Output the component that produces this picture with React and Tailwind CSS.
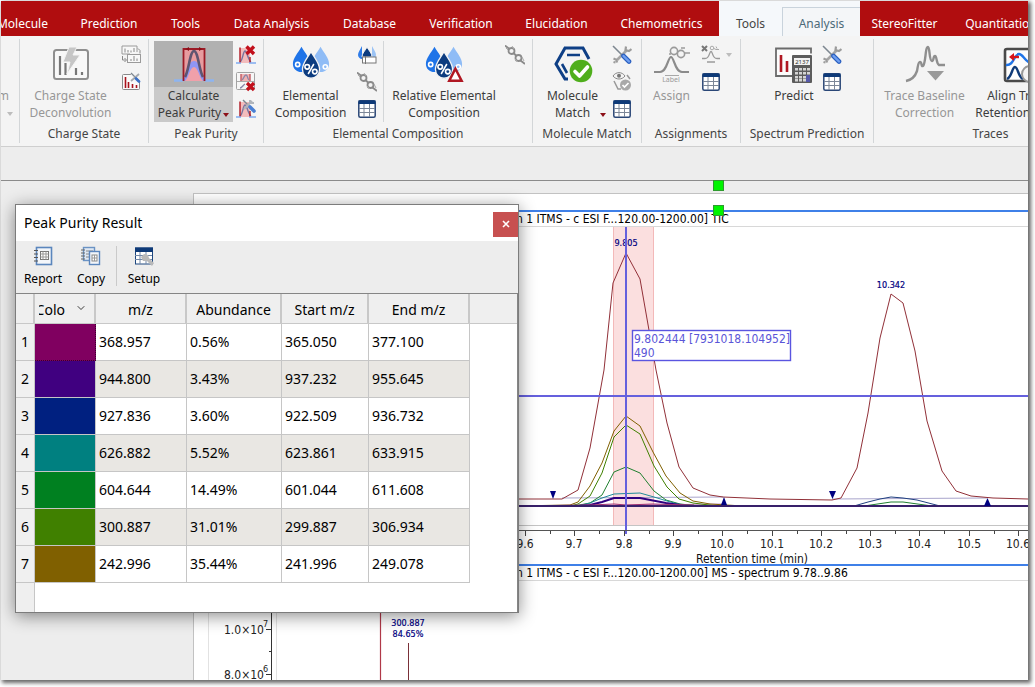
import clsx from 'clsx'
import { ChevronDown } from 'lucide-react'

const MENU_TABS = [
  { label: 'Molecule', className: 'w-[63px] justify-end pr-4' },
  { label: 'Prediction', className: 'w-[90px]' },
  { label: 'Tools', className: 'w-[63px]' },
  { label: 'Data Analysis', className: 'w-[109px]' },
  { label: 'Database', className: 'w-[87px]' },
  { label: 'Verification', className: 'w-[96px]' },
  { label: 'Elucidation', className: 'w-[95px]' },
  { label: 'Chemometrics', className: 'w-[115px]' },
  { label: 'Tools', tone: 'context', className: 'w-[63px]' },
  { label: 'Analysis', tone: 'active', className: 'w-[78px]' },
  { label: 'StereoFitter', className: 'w-[89px]' },
  { label: 'Quantitation', className: 'w-[104px]' },
]

const PEAKS = [
  { color: '#800060', mz: '368.957', abundance: '0.56%', start: '365.050', end: '377.100' },
  { color: '#400080', mz: '944.800', abundance: '3.43%', start: '937.232', end: '955.645' },
  { color: '#002080', mz: '927.836', abundance: '3.60%', start: '922.509', end: '936.732' },
  { color: '#008080', mz: '626.882', abundance: '5.52%', start: '623.861', end: '633.915' },
  { color: '#008020', mz: '604.644', abundance: '14.49%', start: '601.044', end: '611.608' },
  { color: '#408000', mz: '300.887', abundance: '31.01%', start: '299.887', end: '306.934' },
  { color: '#806000', mz: '242.996', abundance: '35.44%', start: '241.996', end: '249.078' },
]

// ─── Icons ────────────────────────────────────────────────────────────────────
function Large({ children, viewBox = '0 0 40 40' }) {
  return (
    <svg width="40" height="40" viewBox={viewBox} fill="none" aria-hidden="true">
      {children}
    </svg>
  )
}

function Small({ children }) {
  return (
    <svg width="20" height="20" viewBox="0 0 20 20" fill="none" aria-hidden="true">
      {children}
    </svg>
  )
}

function DeconvolutionIcon() {
  return (
    <Large>
      <rect x="3" y="6" width="34" height="29" rx="2.5" fill="#f8f8f8" stroke="#8f8f8f" strokeWidth="2" />
      <path d="M9 12v19M14.5 19v12M25 24v7M31 28v3" stroke="#777" strokeWidth="2.2" />
      <path d="M18 3h8l-4 8h7L16 30l3-12h-7z" fill="#c6c6c6" stroke="#f4f4f4" />
    </Large>
  )
}

function SwapSpectraIcon() {
  return (
    <Small>
      <path d="M9 9H1V1h15v6" stroke="#9a9a9a" fill="#f8f8f8" />
      <path d="M4 3.500v4M7 5v2.500M10 5.500v2M13 3v4" stroke="#888" />
      <rect x="6.500" y="9.500" width="13" height="8" stroke="#9a9a9a" fill="#f8f8f8" />
      <path d="M10 14v2M13 11v5M16 13.500v2.500M1.500 11v4h3M3.500 13l2 2-2 2M17 3.500l2 2v3" stroke="#888" />
    </Small>
  )
}

function SpectraOptionsIcon() {
  return (
    <Small>
      <rect x="1.500" y="2.500" width="17" height="15" rx="1" fill="#fafafa" stroke="#8a8a8a" />
      <path d="M4.500 5v11M7.500 10v6M11.500 12v4M15.500 13v3" stroke="#a8121c" strokeWidth="1.600" />
      <path d="M9 1h10v9h-5z" fill="#f4f4f4" />
      <path d="M10 1l7 7" stroke="#7d8790" strokeWidth="1.200" />
      <path d="M10 9l8-7" stroke="#a5a9ae" strokeWidth="1.800" />
      <path d="M15 6.500l3 3" stroke="#3b6fc4" strokeWidth="2.800" strokeLinecap="round" />
    </Small>
  )
}

function PeakPurityIcon() {
  return (
    <Large>
      <path d="M9 5h22v32H9z" fill="#e79c9f" />
      <path d="M1 37c7 0 9-3 11-8 3-8 4-12 8-12s5 4 8 12c2 5 4 8 11 8z" fill="#8f96f5" />
      <path d="M20 23c-4 0-5 10-9 14h18c-4-4-5-14-9-14z" fill="#f0a0aa" />
      <path d="M11 33c4-7 5-26 9-26s5 19 9 26" stroke="#5e5570" strokeWidth="2.600" />
      <path d="M0 36.500h9M31 36.500h9" stroke="#8db4f0" strokeWidth="2.400" />
      <path d="M9.500 37V5h21v32" stroke="#9c1a26" strokeWidth="1.800" />
      <path d="M15 3l-3.500 2L15 7zM25 3l3.500 2L25 7z" fill="#8c1018" />
    </Large>
  )
}

function MiniPeak() {
  return (
    <>
      <path d="M4 3h10v15H4z" fill="#f3bcbc" />
      <path d="M4 17c3-2 3-11 5-11s3 9 6 11" stroke="#77749f" strokeWidth="1.400" />
      <path d="M4 18V2.500M14 18v-6" stroke="#b01722" strokeWidth="1.400" />
      <path d="M0 18h5M13 18h7" stroke="#7fabf0" strokeWidth="1.500" />
    </>
  )
}

function PurityClearIcon() {
  return (
    <Small>
      <MiniPeak />
      <path d="M10.500 1.500l7.500 7.500M18 1.500L10.500 9" stroke="#c2101c" strokeWidth="3.400" />
    </Small>
  )
}

function PurityRemoveIcon() {
  return (
    <Small>
      <rect x="0.500" y="0.500" width="18" height="17" rx="1" fill="#f6f6f6" stroke="#a2a2a2" />
      <path d="M5 2h9v7H5z" fill="#f1b3b3" />
      <path d="M1 9.500h17" stroke="#aaa" />
      <path d="M5 2v7M14 2v7" stroke="#c25a62" strokeWidth="1.400" />
      <path d="M6 8c2-1 2-5 4-5s1 4 3 5M4 16c2 0 3-3 5-4" stroke="#8a86a8" strokeWidth="1.300" />
      <path d="M11 11l7 7M18 11l-7 7" stroke="#c2101c" strokeWidth="3.200" />
    </Small>
  )
}

function PurityOptionsIcon() {
  return (
    <Small>
      <MiniPeak />
      <path d="M7 1l8 8" stroke="#7d8790" strokeWidth="1.400" />
      <path d="M8 10l8-8M14 1l0 3 4 0" stroke="#b0b5bb" strokeWidth="2" />
      <path d="M14 8l4 4" stroke="#4a80d4" strokeWidth="3.600" strokeLinecap="round" />
    </Small>
  )
}

function Drops() {
  return (
    <>
      <path d="M10 3C6 10 1 15 1 21c0 5 4 8.500 9 8.500S19 26 19 21c0-6-5-11-9-18z" fill="#1f74e8" />
      <path d="M30 3c-4 7-9 12-9 18 0 5 4 8.500 9 8.500s9-3.500 9-8.500c0-6-5-11-9-18z" fill="#8fbcf6" />
      <circle cx="6" cy="21.500" r="2.200" stroke="#fff" strokeWidth="1.700" />
      <circle cx="35" cy="24" r="2.200" stroke="#fff" strokeWidth="1.700" />
      <path d="M20 8c-4 7-9 12-9 18.500 0 5.500 4 9.500 9 9.500s9-4 9-9.500C29 20 24 15 20 8z" fill="#0c3c80" stroke="#f4f4f4" strokeWidth="1.400" />
      <circle cx="16" cy="24" r="2.400" stroke="#fff" strokeWidth="1.700" />
      <circle cx="24" cy="29" r="2.400" stroke="#fff" strokeWidth="1.700" />
      <path d="M23 21l-6 10.500" stroke="#fff" strokeWidth="1.600" />
    </>
  )
}

function ElementalIcon() {
  return <Large viewBox="-1 0 42 42"><Drops /></Large>
}

function RelativeElementalIcon() {
  return (
    <Large viewBox="-1 0 42 42">
      <Drops />
      <path d="M32 26l6.500 12.500h-13z" fill="#fff" stroke="#b01722" strokeWidth="2.600" />
    </Large>
  )
}

function DropsEditIcon() {
  return (
    <Small>
      <path d="M5 1c-2 4-4 6-4 9 0 2 2 4 4 4z" fill="#2f7ce8" />
      <path d="M15 1c2 4 4 6 4 9 0 2-2 4-4 4z" fill="#9bc3f5" />
      <path d="M10 2c-2 4-5 6-5 10h10c0-4-3-6-5-10z" fill="#0c3c80" stroke="#f4f4f4" />
      <rect x="5.500" y="12" width="13.500" height="6" fill="#fff" stroke="#777" />
      <path d="M8.500 11v8" stroke="#777" />
    </Small>
  )
}

function ChainIcon() {
  return (
    <Small>
      <g stroke="#8b8b8b" strokeWidth="1.800">
        <circle cx="6.500" cy="6" r="3" />
        <circle cx="13.500" cy="13" r="3" />
        <path d="M0 0.500l4.500 3.500M8.500 8l3 3M15.500 15.500l4.500 3.500" />
      </g>
      <path d="M1 3l2 2M7 1l2 3M10 14l3 3M17 12l2 4" stroke="#aaa" />
    </Small>
  )
}

function TableIcon() {
  return (
    <Small>
      <rect x="1.800" y="1.800" width="16.400" height="16.400" rx="1.500" fill="#fff" stroke="#2a4777" strokeWidth="1.500" />
      <path d="M1.500 1.500h17v3.500h-17z" fill="#0e3a78" />
      <path d="M7 5v13M12.500 5v13M2 9.500h16M2 13.500h16" stroke="#7c8798" />
    </Small>
  )
}

function MoleculeMatchIcon() {
  return (
    <Large>
      <path d="M15 35h-3L3 20 12 4h18l6 11" stroke="#0e3f86" strokeWidth="3" />
      <path d="M14 11h13M9 20l5 9" stroke="#0e3f86" strokeWidth="2.600" />
      <circle cx="28" cy="27" r="12.500" fill="#f4f4f4" />
      <circle cx="28" cy="27" r="11.300" fill="#4fae1c" />
      <path d="M22 27.500l4.500 4.500 8-9" stroke="#fff" strokeWidth="3.600" strokeLinecap="round" strokeLinejoin="round" />
    </Large>
  )
}

function WrenchScrewdriverIcon() {
  return (
    <Small>
      <path d="M5 15L15 5" stroke="#a6a6a6" strokeWidth="2.600" />
      <path d="M1.500 13.500l2.800 1.200.8 2.800M1.500 17l2 .5M14 1.500l-.5 3.500 3.500 1 2.500-2" stroke="#9c9c9c" strokeWidth="2.200" />
      <path d="M1 1l10 10" stroke="#7d8790" strokeWidth="1.600" />
      <path d="M11.500 11l5.500 5.500" stroke="#2a5fc0" strokeWidth="4.600" strokeLinecap="round" />
      <path d="M11.500 11l5.500 5.500" stroke="#6f9ff0" strokeWidth="2.400" strokeLinecap="round" />
    </Small>
  )
}

function EyeMatchIcon() {
  return (
    <Small>
      <path d="M1 4c3-4.500 9-4.500 12 0-3 4-9 4-12 0z" stroke="#888" />
      <circle cx="7" cy="3.800" r="2" fill="#777" />
      <path d="M2 9l4 8h3M15 3l3 4" stroke="#999" strokeWidth="1.500" />
      <circle cx="13.500" cy="13" r="5.500" fill="#a9a9a9" />
      <path d="M10.500 13l2 2 4-4" stroke="#fff" strokeWidth="1.700" />
    </Small>
  )
}

function AssignIcon() {
  return (
    <Large>
      <path d="M2 28h6c7 0 8-15 11-15s4 15 11 15h7" stroke="#8b8b8b" strokeWidth="2.200" />
      <g stroke="#9a9a9a" strokeWidth="1.600">
        <circle cx="22" cy="7" r="3.600" fill="#f4f4f4" />
        <circle cx="29" cy="10" r="3.600" fill="#f4f4f4" />
        <path d="M32 9h6M29 4h4M17 10h2" />
      </g>
      <path d="M13 31.500h14" stroke="#a8a8a8" />
      <text x="19" y="38" textAnchor="middle" fontSize="7" fill="#9a9a9a">Label</text>
    </Large>
  )
}

function AssignClearIcon() {
  return (
    <Small>
      <path d="M1 1l5 5M6 1L1 6" stroke="#777" strokeWidth="2" />
      <path d="M1 13.500h3c5 0 4-7 6-7s1 7 6 7h3M6 17h8" stroke="#9a9a9a" strokeWidth="1.300" />
      <circle cx="11" cy="3" r="1.800" stroke="#aaa" />
      <path d="M13 3.500l2 1h3M15 1.500l1 2" stroke="#aaa" />
    </Small>
  )
}

function PredictIcon() {
  return (
    <Large>
      <path d="M20 32H2V4.500h35v5" stroke="#6b6b6b" strokeWidth="1.800" fill="#fcfcfc" />
      <path d="M7 11v17M13 17v11" stroke="#b01722" strokeWidth="2.600" />
      <rect x="18" y="11" width="20" height="28" rx="1" fill="#5c5c5c" />
      <rect x="20" y="14" width="16" height="7" fill="#f2f2f2" />
      <text x="28" y="20" textAnchor="middle" fontSize="6" fill="#333">2137</text>
      <g fill="#d5d5d5">
        {[24, 28, 32, 35].map(y =>
          [21, 25, 29, 33].map(x => <rect key={`${x}-${y}`} x={x} y={y} width="3" height="2.500" />)
        )}
      </g>
      <path d="M32 31h4v7h-4z" fill="#5659a8" />
    </Large>
  )
}

function BaselineIcon() {
  return (
    <Large>
      <path d="M1 37c5-1 9-4 11-10 1-5 1-9 3-9s1 5 3 4c3-3 2-19 5-19 2 0 1 14 4 14 2 0 1-5 3-5s1 7 4 9h6" stroke="#8f8f8f" strokeWidth="2.400" />
      <path d="M22 27h17l-8.500 9.500z" fill="#9a9a9a" />
    </Large>
  )
}

function AlignIcon() {
  return (
    <Large>
      <rect x="4" y="5" width="33" height="32" rx="2" fill="#fdfdfd" stroke="#4a4a4a" strokeWidth="2.600" />
      <path d="M5 21c8 1 8-11 13-11s5 10 18 10" stroke="#1f74e8" strokeWidth="2.400" />
      <path d="M6 35c5-2 5-12 8-12s3 10 8 12" stroke="#0e3a78" strokeWidth="2.400" />
      <path d="M18 13h-6" stroke="#d8141c" strokeWidth="2.400" />
      <path d="M13 9l-5 4 5 4z" fill="#d8141c" />
      <circle cx="29" cy="30" r="8" fill="#f4f4f4" stroke="#999" strokeWidth="2" />
    </Large>
  )
}

function ReportIcon() {
  return (
    <Small>
      <rect x="3.500" y="1.500" width="15" height="17" fill="#f3f6fa" stroke="#5b86bd" strokeWidth="1.600" />
      <path d="M1 4.500h4M1 8h4M1 11.500h4M1 15h4" stroke="#555" strokeWidth="1.200" />
      <rect x="7.500" y="5.500" width="8" height="8" fill="#fff" stroke="#777" />
      <path d="M10 5.500v8M13 5.500v8M7.500 8h8M7.500 11h8" stroke="#999" />
    </Small>
  )
}

function CopyReportIcon() {
  return (
    <Small>
      <rect x="2.500" y="1.500" width="11" height="13" fill="#dfe8f3" stroke="#6b93c4" strokeWidth="1.400" />
      <path d="M0 4h4M0 7h4M0 10h4M0 13h4" stroke="#666" />
      <path d="M5 5h7M5 8h3M5 11h3" stroke="#888" />
      <rect x="8.500" y="5.500" width="10" height="13" fill="#f3f6fa" stroke="#5b86bd" strokeWidth="1.400" />
      <rect x="11" y="9" width="5" height="6" fill="#fff" stroke="#888" />
      <path d="M13.500 9v6M11 12h5" stroke="#999" />
    </Small>
  )
}

function SetupIcon() {
  return (
    <Small>
      <rect x="1.500" y="2" width="17" height="16" fill="#fff" stroke="#1f4880" />
      <path d="M1 1.500h18V6H1z" fill="#0e3a78" />
      <path d="M6 6v12M12 6v12M1 9.500h17M1 13.500h17" stroke="#7288a8" />
      <path d="M7 11l3-3 4 1 1 3 5 5-2 3-5-5-4 0z" fill="#b9b9b9" />
    </Small>
  )
}

// ─── Ribbon ───────────────────────────────────────────────────────────────────
function MenuTab({ label, tone, className }) {
  return (
    <button
      className={clsx(
        'flex shrink-0 items-center text-[12px] whitespace-nowrap',
        !className.includes('justify-end') && 'justify-center',
        !tone && 'bg-[#b00d0f] pt-[10px] text-white',
        tone === 'context' && 'bg-[#f5f8fb] pt-[10px] text-[#444]',
        tone === 'active' && 'mt-[6px] border-t border-l border-[#c9d3dc] bg-[#f4f6f8] pt-[3px] text-[#4c6a78]',
        className,
      )}
    >
      {label}
    </button>
  )
}

function Caret({ className }) {
  return <span className={clsx('inline-block border-x-[3px] border-t-[4px] border-x-transparent', className)} />
}

function BigButton({ icon: Icon, lines, disabled, active, caret, className }) {
  return (
    <button
      disabled={disabled}
      className={clsx(
        'flex h-[81px] shrink-0 flex-col text-[12px] leading-[17px] whitespace-nowrap',
        disabled ? 'text-[#979797]' : 'text-[#3c3c3c]',
        active && 'bg-[#c9c9c9]',
        className,
      )}
    >
      <span className={clsx('flex h-[46px] w-full items-center justify-center', active && 'bg-[#b1b1b1]')}>
        <Icon />
      </span>
      {lines.map((line, i) => (
        <span key={line} className="flex w-full items-center justify-center">
          {line}
          {caret && i === lines.length - 1 && <Caret className={caret} />}
        </span>
      ))}
    </button>
  )
}

function SmallColumn({ items, className }) {
  return (
    <div className={clsx('flex w-5 shrink-0 flex-col', className)}>
      {items.map(({ icon: Icon, name }) => (
        <button key={name} aria-label={name} className="flex h-[27px] items-center justify-center">
          <Icon />
        </button>
      ))}
    </div>
  )
}

function Group({ label, className, children }) {
  return (
    <section className={clsx('my-[3px] flex shrink-0 flex-col border-r border-[#d3d6d8] pt-[2px]', className)}>
      <div className="flex">{children}</div>
      <h2 className="flex flex-1 items-center justify-center pt-[2px] text-[12px] whitespace-nowrap text-[#444]">{label}</h2>
    </section>
  )
}

function Ribbon() {
  return (
    <div className="flex h-[111px] shrink-0 overflow-hidden border-b border-[#cfcfcf] bg-[#f4f4f4]">
      <section className="my-[3px] w-[19px] shrink-0 overflow-hidden border-r border-[#d3d6d8] pt-[48px] text-[12px] leading-[17px] text-[#979797]">
        <div className="flex w-2 justify-end">m</div>
        <div className="flex justify-center"><Caret className="mt-2 border-t-[#bdbdbd]" /></div>
      </section>
      <Group label="Charge State" className="w-[129px]">
        <BigButton icon={DeconvolutionIcon} lines={['Charge State', 'Deconvolution']} disabled className="w-[101px]" />
        <SmallColumn items={[
          { icon: SwapSpectraIcon, name: 'Swap spectra' },
          { icon: SpectraOptionsIcon, name: 'Charge state options' },
        ]} />
      </Group>
      <Group label="Peak Purity" className="w-[115px]">
        <BigButton
          icon={PeakPurityIcon}
          lines={['Calculate', 'Peak Purity']}
          active
          caret="ml-[2px] mt-1 border-t-[#8c1018]"
          className="ml-[5px] w-[79px]"
        />
        <SmallColumn className="ml-[3px]" items={[
          { icon: PurityClearIcon, name: 'Clear peak purity' },
          { icon: PurityRemoveIcon, name: 'Remove all' },
          { icon: PurityOptionsIcon, name: 'Peak purity options' },
        ]} />
      </Group>
      <Group label="Elemental Composition" className="w-[269px]">
        <BigButton icon={ElementalIcon} lines={['Elemental', 'Composition']} className="w-[93px]" />
        <SmallColumn items={[
          { icon: DropsEditIcon, name: 'Edit composition' },
          { icon: ChainIcon, name: 'Link' },
          { icon: TableIcon, name: 'Composition table' },
        ]} />
        <div className="ml-[6px] w-px bg-[#d3d6d8]" />
        <BigButton icon={RelativeElementalIcon} lines={['Relative Elemental', 'Composition']} className="w-[120px]" />
        <SmallColumn className="ml-[1px]" items={[{ icon: ChainIcon, name: 'Link relative' }]} />
      </Group>
      <Group label="Molecule Match" className="w-[109px]">
        <BigButton
          icon={MoleculeMatchIcon}
          lines={['Molecule', 'Match']}
          caret="ml-[10px] -mr-4 mt-1 border-t-[#8c1018]"
          className="w-[79px]"
        />
        <SmallColumn items={[
          { icon: WrenchScrewdriverIcon, name: 'Match options' },
          { icon: EyeMatchIcon, name: 'Show matches' },
          { icon: TableIcon, name: 'Match table' },
        ]} />
      </Group>
      <Group label="Assignments" className="w-[99px]">
        <BigButton icon={AssignIcon} lines={['Assign']} disabled className="w-[59px]" />
        <SmallColumn items={[
          { icon: AssignClearIcon, name: 'Clear assignments' },
          { icon: TableIcon, name: 'Assignment table' },
        ]} />
        <div className="flex h-[27px] w-4 items-center justify-center"><Caret className="border-t-[#bdbdbd]" /></div>
      </Group>
      <Group label="Spectrum Prediction" className="w-[133px]">
        <BigButton icon={PredictIcon} lines={['Predict']} className="ml-[25px] w-[56px]" />
        <SmallColumn items={[
          { icon: WrenchScrewdriverIcon, name: 'Prediction options' },
          { icon: TableIcon, name: 'Prediction table' },
        ]} />
      </Group>
      <Group label="Traces" className="w-[234px]">
        <BigButton icon={BaselineIcon} lines={['Trace Baseline', 'Correction']} disabled className="w-[101px]" />
        <BigButton icon={AlignIcon} lines={['Align Traces', 'Retention Times']} className="w-[92px]" />
      </Group>
    </div>
  )
}

// ─── Charts ───────────────────────────────────────────────────────────────────
const TIC_TRACES = [
  { color: '#c090c8', points: '320,279 362,279 529,277' },
  { color: '#a9a5cc', points: '368,271 529,270' },
  { color: '#a9a5cc', points: '638,272 793,271' },
  { color: '#806000', points: '320,279 376,278 384,275 396,259 408,236 420,204 432,189 446,199 459,225 472,249 486,266 499,274 516,277 549,279' },
  { color: '#408000', points: '376,279 384,277 396,269 408,246 420,210 432,198 446,207 460,239 473,260 485,272 499,276 523,279' },
  { color: '#208030', points: '380,279 396,276 408,268 420,245 432,240 446,246 460,264 472,273 486,277 506,279' },
  { color: '#208a98', points: '384,279 396,276 408,271 420,267 446,266 460,270 473,274 484,277 500,279' },
  { color: '#300080', points: '384,279 396,278 408,275 420,271 446,271 472,276 493,279', width: 2 },
  { color: '#a03070', points: '320,279 396,278 420,277 432,278 459,277 500,278' },
  { color: '#204080', points: '660,279 674,275 686,272 697,270 709,271 723,273 746,279' },
  { color: '#208030', points: '670,279 697,275 709,275 738,279' },
]

const TIC_MAIN =
  '320,272 368,272 384,263 396,221 410,143 419,56 432,26 446,52 462,143 473,196 485,240 499,261 516,268 529,270 576,272 638,273 ' +
  '647,271 663,241 674,186 686,111 697,67 709,76 721,124 733,194 748,244 762,264 777,269 799,271 834,272 900,273'

const TICKS = ['9.6', '9.7', '9.8', '9.9', '10.0', '10.1', '10.2', '10.3', '10.4', '10.5', '10.6']
// pixel position of a tick; 9.6 min sits at 331 and each 0.1 min is 49.3 px
const tickX = i => Math.round(331 + i * 49.3)

function ChartTitle({ children }) {
  return (
    <div className="h-[17px] shrink-0 overflow-hidden border-t-2 border-b border-t-[#3f80e8] border-b-[#d8d8d8] pl-[322px] text-[12px] leading-[15px] whitespace-nowrap text-black">
      {children}
    </div>
  )
}

function TicChart() {
  return (
    <svg width="100%" height="337" className="block shrink-0" fontSize="12" role="img" aria-label="TIC chromatogram">
      <rect x="419" y="0" width="41" height="299" fill="#fbdfdf" />
      <path d="M419.500 0v299M459.500 0v299" stroke="#f3b9b9" />
      <path d="M0 298.500h900" stroke="#c4c4c4" />
      {TIC_TRACES.map((t, i) => (
        <polyline key={i} points={t.points} fill="none" stroke={t.color} strokeWidth={t.width ?? 1} />
      ))}
      <path d="M0 279h900" stroke="#38206a" strokeWidth="2" />
      <polyline points={TIC_MAIN} fill="none" stroke="#913038" />
      <g fill="#000080">
        <path d="M356 264h6l-3 8zM635 264h7l-3.500 8zM527 278h6l-3-8zM790 279h7l-3.500-8z" />
        <g fontSize="9" textAnchor="middle" stroke="#000080" strokeWidth="0.200">
          <text x="432" y="19">9.805</text>
          <text x="697" y="61">10.342</text>
        </g>
      </g>
      <path d="M0 169h900M432 0v307" stroke="#6560dd" strokeWidth="2" />
      <rect x="438.500" y="103.500" width="158" height="30" fill="#fff" stroke="#5a55e0" strokeWidth="1.400" />
      <g fill="#5a55d8">
        <text x="440" y="116">9.802444 [7931018.104952]</text>
        <text x="440" y="130">490</text>
      </g>
      <path d="M0 303.500h900" stroke="#555" />
      {TICKS.map((label, i) => (
        <g key={label}>
          <path d={`M${tickX(i)}.5 304v5M${tickX(i) + 25}.5 304v3`} stroke="#444" />
          <text x={tickX(i)} y="321" textAnchor="middle" fill="#222">{label}</text>
        </g>
      ))}
      <text x="558" y="336" textAnchor="middle" fill="#111">Retention time (min)</text>
    </svg>
  )
}

function SpectrumChart() {
  return (
    <svg width="100%" height="120" className="block shrink-0" fontSize="12" role="img" aria-label="Mass spectrum">
      <path d="M14.500 0v120M82.500 0v120" stroke="#e2e2e2" />
      <path d="M77.500 0v120M72 48.500h5M75 70.500h2M72 93.500h5" stroke="#333" />
      <g fill="#222">
        <text x="30" y="53">1.0×10</text>
        <text x="69" y="46" fontSize="9">7</text>
        <text x="30" y="98">8.0×10</text>
        <text x="69" y="91" fontSize="9">6</text>
      </g>
      <path d="M186.500 0v120" stroke="#b03848" strokeWidth="1.200" />
      <path d="M214.500 62v60" stroke="#7a3038" />
      <g fill="#000080" fontSize="9" textAnchor="middle" stroke="#000080" strokeWidth="0.200">
        <text x="214" y="45">300.887</text>
        <text x="214" y="56">84.65%</text>
      </g>
    </svg>
  )
}

function Handle({ className }) {
  return <span className={clsx('absolute left-[519px] size-[11px] border border-[#2f9a2f] bg-[#00f400]', className)} />
}

function Workspace() {
  return (
    <div className="flex min-h-0 flex-1 flex-col">
      <div className="h-[33px] shrink-0 bg-[#ededed]" />
      <div className="flex min-h-0 flex-1 border-t border-[#8b8b8b] bg-[#ededed] pt-3 pl-[192px]">
        <div className="relative flex min-w-0 flex-1 flex-col border-t border-l border-[#c2c2c2] bg-white pt-4 font-['DejaVu_Sans_Condensed',Tahoma,sans-serif]">
          <div className="flex min-h-0 flex-1 flex-col overflow-hidden">
            <ChartTitle>n 1 ITMS - c ESI F...120.00-1200.00] TIC</ChartTitle>
            <TicChart />
            <ChartTitle>n 1 ITMS - c ESI F...120.00-1200.00] MS - spectrum 9.78..9.86</ChartTitle>
            <SpectrumChart />
          </div>
          <Handle className="-top-[14px]" />
          <Handle className="top-[11px]" />
        </div>
      </div>
    </div>
  )
}

// ─── Peak purity dialog ───────────────────────────────────────────────────────
function ToolButton({ icon: Icon, label }) {
  return (
    <button className="flex w-12 flex-col items-center gap-[5px] text-[12px] leading-[16px] text-black">
      <Icon />
      {label}
    </button>
  )
}

function PeakTable() {
  const head = 'border-r-2 border-b border-[#c8c8c8] bg-[#efefef] px-0 pt-[2px] pb-0 text-center font-normal'
  const cell = 'border-r border-b border-[#c6c6c6] px-[3px] py-0'

  return (
    <table className="w-full table-fixed border-separate border-spacing-0 border-t border-r border-[#858585] text-[14px] leading-[20px] text-black">
      <colgroup>
        <col className="w-[19px]" />
        <col className="w-[61px]" />
        <col className="w-[91px]" />
        <col className="w-[95px]" />
        <col className="w-[87px]" />
        <col className="w-[101px]" />
        <col />
      </colgroup>
      <thead>
        <tr className="h-[30px]">
          <th className={head} aria-label="Row" />
          <th className={head} aria-label="Color">
            <span className="flex items-center justify-between pr-[7px] pl-[4px]">
              <span className="flex w-[26px] justify-end overflow-hidden">Colo</span>
              <ChevronDown size={12} strokeWidth={1.5} className="mb-1" />
            </span>
          </th>
          <th className={head}>m/z</th>
          <th className={head}>Abundance</th>
          <th className={head}>Start m/z</th>
          <th className={head}>End m/z</th>
          <th className="border-b border-[#c8c8c8] bg-[#efefef]" />
        </tr>
      </thead>
      <tbody>
        {PEAKS.map((p, i) => (
          <tr key={p.mz} className={clsx('h-[37px]', i % 2 === 1 && 'bg-[#e9e7e3]')}>
            <th className="border-r border-b border-[#c6c6c6] bg-[#f0f0f0] p-0 text-center font-normal">{i + 1}</th>
            <td
              className={clsx('border-r border-b p-0', i === 0 ? 'border-dotted border-[#3a002c]' : 'border-[#c6c6c6]')}
              style={{ backgroundColor: p.color }}
            />
            <td className={cell}>{p.mz}</td>
            <td className={cell}>{p.abundance}</td>
            <td className={cell}>{p.start}</td>
            <td className={cell}>{p.end}</td>
            <td className="bg-white" />
          </tr>
        ))}
        <tr className="h-[29px]">
          <th className="border-r border-[#c6c6c6] bg-[#efefef]" />
          <td colSpan={6} />
        </tr>
      </tbody>
    </table>
  )
}

function PeakPurityDialog() {
  return (
    <div
      role="dialog"
      aria-label="Peak Purity Result"
      className="absolute top-[203px] left-[14px] w-[504px] border border-[#7c7c7c] bg-white shadow-[0_3px_16px_rgba(0,0,0,0.45)]"
    >
      <div className="flex h-9 items-center justify-between pl-2">
        <h1 className="pb-[2px] text-[14px] text-black">Peak Purity Result</h1>
        <button aria-label="Close" className="mt-[2px] flex size-[25px] items-center justify-center bg-[#c75050]">
          <svg width="8" height="8" viewBox="0 0 8 8" aria-hidden="true">
            <path d="M1 1l6 6M7 1L1 7" stroke="#fff" strokeWidth="1.600" />
          </svg>
        </button>
      </div>
      <div className="flex h-[52px] items-start bg-[#ededed] pt-[5px] pl-[3px]">
        <ToolButton icon={ReportIcon} label="Report" />
        <ToolButton icon={CopyReportIcon} label="Copy" />
        <div className="mr-[3px] ml-[1px] h-10 w-px bg-[#cacaca]" />
        <ToolButton icon={SetupIcon} label="Setup" />
      </div>
      <PeakTable />
    </div>
  )
}

export default function App() {
  return (
    <div className="h-screen overflow-hidden bg-white pt-px pr-[7px] pb-[7px] pl-px font-['Noto_Sans','Segoe_UI',sans-serif]">
      <main className="relative flex h-full flex-col bg-[#ededed] shadow-[2px_2px_4px_1px_rgba(0,0,0,0.6)]">
        <nav className="flex h-[35px] shrink-0 overflow-hidden bg-[#f5f8fb]">
          {MENU_TABS.map((tab, i) => <MenuTab key={i} {...tab} />)}
        </nav>
        <Ribbon />
        <Workspace />
        <PeakPurityDialog />
      </main>
    </div>
  )
}
